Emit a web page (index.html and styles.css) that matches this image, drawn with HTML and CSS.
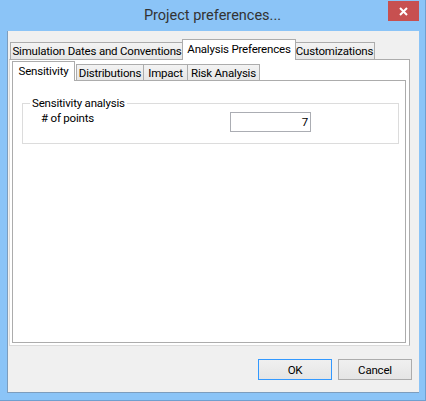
FILE: index.html
```html
<!DOCTYPE html>
<html>
<head>
<meta charset="utf-8">
<link rel="stylesheet" href="styles.css">
</head>
<body>
<div class="window">
  <div class="titlebar">
    <div></div>
    <div class="title">Project preferences...</div>
    <div class="close">
      <svg width="9" height="9" viewBox="0 0 9 9"><path d="M1 1 L8 8 M8 1 L1 8" stroke="#fff" stroke-width="2" fill="none"/></svg>
    </div>
  </div>
  <div class="client">
    <div class="tabctl">
      <div class="tabs">
        <div class="tab t-sim">Simulation Dates and Conventions</div>
        <div class="tab active t-ana">Analysis Preferences</div>
        <div class="tab t-cus">Customizations</div>
      </div>
      <div class="panel">
        <div class="subtabs">
          <div class="subtab active s-sen">Sensitivity</div>
          <div class="subtab s-dis">Distributions</div>
          <div class="subtab s-imp">Impact</div>
          <div class="subtab s-risk">Risk Analysis</div>
        </div>
        <div class="subpanel">
          <fieldset class="group">
            <legend class="legend">Sensitivity analysis</legend>
            <div class="row">
              <span class="label">#&nbsp;of points</span>
              <div class="input">7</div>
            </div>
          </fieldset>
        </div>
      </div>
    </div>
    <div class="buttons">
      <div class="btn default">OK</div>
      <div class="btn">Cancel</div>
    </div>
  </div>
</div>
</body>
</html>
```
FILE: styles.css
```css
html, body {
  margin: 0;
  padding: 0;
}
body {
  font-family: Roboto, "Liberation Sans", sans-serif;
  font-size: 11.5px;
  letter-spacing: -0.2px;
  color: #000;
}
.window {
  width: 426px;
  height: 401px;
  box-sizing: border-box;
  background: #8bc4f7;
  border-right: 1px solid #6f9fcf;
  border-bottom: 1px solid #6f9fcf;
  display: flex;
  flex-direction: column;
}
.titlebar {
  height: 31px;
  display: grid;
  grid-template-columns: 1fr auto 1fr;
}
.title {
  font-size: 14.5px;
  letter-spacing: 0;
  line-height: 30px;
  padding-top: 1px;
  color: #333;
}
.close {
  justify-self: end;
  align-self: start;
  margin-top: 1px;
  margin-right: 6px;
  width: 31px;
  height: 20px;
  background: #c75050;
  display: flex;
  align-items: center;
  justify-content: center;
}
.client {
  margin-left: 7px;
  width: 412px;
  height: 362px;
  box-sizing: border-box;
  background: #f0f0f0;
  border-left: 1px solid #7d9dbd;
  border-bottom: 1px solid #7d9dbd;
  display: flex;
  flex-direction: column;
}
.tabctl {
  margin-top: 8px;
  margin-left: 1px;
  width: 401px;
  display: flex;
  flex-direction: column;
}
.tabs {
  height: 20px;
  display: flex;
  align-items: flex-end;
  padding-left: 1px;
}
.tab {
  box-sizing: border-box;
  height: 17px;
  line-height: 16px;
  border: 1px solid #acacac;
  border-bottom: none;
  background: linear-gradient(#f3f3f3, #e6e6e6);
  text-align: center;
  white-space: nowrap;
}
.tab.active {
  position: relative;
  z-index: 1;
  height: 21px;
  margin-bottom: -1px;
  line-height: 18px;
  background: #fff;
}
.t-sim { width: 174px; }
.t-ana { width: 114px; margin-left: -2px; }
.t-cus { width: 81px; margin-left: -2px; }
.panel {
  box-sizing: border-box;
  height: 287px;
  background: #fff;
  border: 1px solid #acacac;
  border-left-color: #dadada;
  border-bottom-color: #dadada;
  padding: 1px 3px 2px 2px;
  display: flex;
  flex-direction: column;
}
.subtabs {
  height: 19px;
  display: flex;
  align-items: flex-end;
}
.subtab {
  box-sizing: border-box;
  height: 16px;
  line-height: 16px;
  border: 1px solid #acacac;
  border-bottom: none;
  background: linear-gradient(#f3f3f3, #e6e6e6);
  text-align: center;
  white-space: nowrap;
}
.subtab.active {
  position: relative;
  z-index: 1;
  height: 20px;
  margin-bottom: -1px;
  line-height: 18px;
  background: #fff;
}
.s-sen { width: 63px; }
.s-dis { width: 68px; margin-left: 1px; }
.s-imp { width: 45px; margin-left: -1px; }
.s-risk { width: 73px; margin-left: -1px; }
.subpanel {
  flex: 1;
  border: 1px solid #acacac;
  background: #fff;
  display: flex;
  flex-direction: column;
}
.group {
  margin: 14px 6px 0 9px;
  padding: 1px 0 11px 7px;
  border: 1px solid #dcdcdc;
  min-width: 0;
}
.legend {
  padding: 0 2px;
  line-height: 16px;
}
.row {
  display: flex;
  align-items: flex-start;
}
.label {
  margin-left: 11px;
  line-height: 13px;
}
.input {
  margin-left: auto;
  margin-right: 87px;
  box-sizing: border-box;
  width: 81px;
  height: 20px;
  border: 1px solid #abadb3;
  background: #fff;
  text-align: right;
  padding-right: 2px;
  line-height: 18px;
}
.buttons {
  margin-top: 13px;
  margin-right: 7px;
  display: flex;
  justify-content: flex-end;
  gap: 6px;
}
.btn {
  box-sizing: border-box;
  width: 74px;
  height: 21px;
  line-height: 20px;
  text-align: center;
  border: 1px solid #acacac;
  background: linear-gradient(#f0f0f0, #e5e5e5);
  overflow: hidden;
}
.btn.default {
  border-color: #3399ff;
}
```
